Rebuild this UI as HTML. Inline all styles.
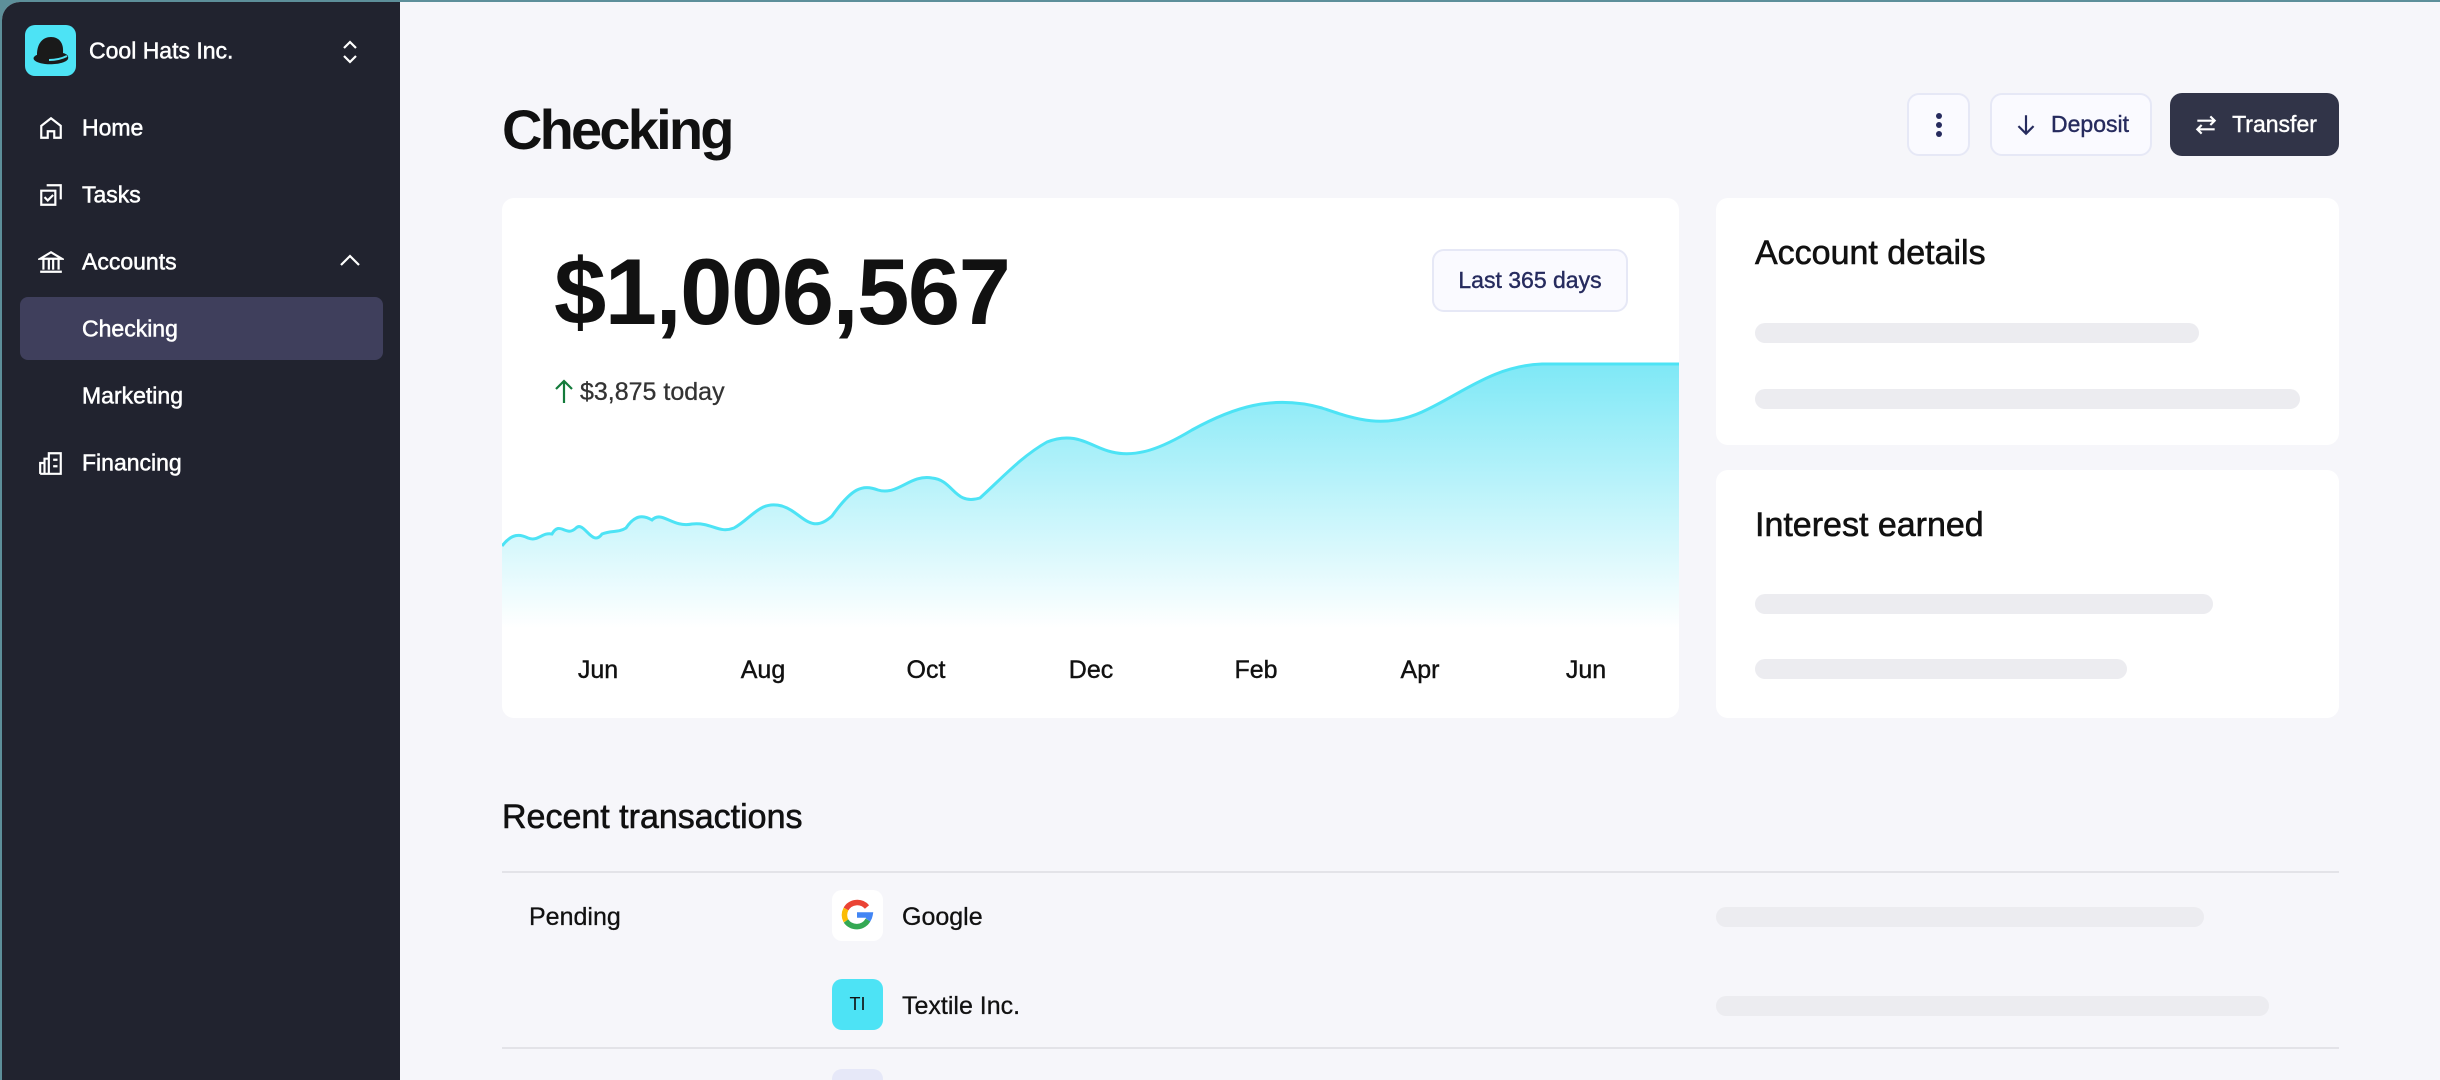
<!DOCTYPE html>
<html><head><meta charset="utf-8"><style>
*{box-sizing:border-box;margin:0;padding:0}
body{width:2440px;height:1080px;overflow:hidden;background:#5d8f9a;font-family:"Liberation Sans",sans-serif}
.frame{position:absolute;left:2px;top:2px;width:2438px;height:1078px;background:#f6f6fa;border-radius:18px 0 0 0;overflow:hidden}
.side{position:absolute;left:0;top:0;width:398px;height:1078px;background:#21232f;color:#fff}
.abs{position:absolute}
.med{-webkit-text-stroke:0.6px currentColor}
.nav{position:absolute;left:80px;font-size:23px;color:#fff;transform:translateY(-50%);-webkit-text-stroke:0.5px #fff}
.ico{position:absolute;left:36px;transform:translateY(-50%)}
.card{position:absolute;background:#fff;border-radius:12px}
.sk{position:absolute;height:20px;border-radius:10px;background:#ececf0}
.btn{position:absolute;border:2px solid #e6e8f6;background:#fafaff;border-radius:12px;color:#262b5e;font-size:23px;display:flex;align-items:center;justify-content:center;-webkit-text-stroke:0.4px #262b5e}
.m{position:absolute;font-size:25px;color:#111;transform:translateX(-50%);-webkit-text-stroke:0.4px #111}
</style></head><body><div class="frame">
<div class="side">
 <div class="abs" style="left:23px;top:23px;width:51px;height:51px;background:#4de3f5;border-radius:10px">
  <svg width="51" height="51" viewBox="0 0 51 51"><path d="M12 30 C12 18 18 12 26 12 C34 12 39 18 38 28 C42 29 44 31 43 34 C41 38 30 40 20 39 C12 38 7 35 9 32 C10 31 11 30 12 30Z" fill="#1a1a1a"/><path d="M24 35 C31 35 38 33 42 31" stroke="#4de3f5" stroke-width="2" fill="none"/></svg>
 </div>
 <div class="nav" style="left:87px;top:49px;font-size:23px">Cool Hats Inc.</div>
 <svg class="abs" style="left:338px;top:37px" width="20" height="26" viewBox="0 0 20 26"><path d="M4 9l6-6 6 6M4 17l6 6 6-6" stroke="#fff" stroke-width="2.2" fill="none"/></svg>
 <svg class="ico" style="top:126px" width="26" height="26" viewBox="0 0 24 24" fill="none" stroke="#fff" stroke-width="2"><path d="M3 10l9-7 9 7v11h-6v-6h-6v6H3z"/></svg>
 <div class="nav" style="top:126px">Home</div>
 <svg class="ico" style="top:193px" width="26" height="26" viewBox="0 0 24 24" fill="none" stroke="#fff" stroke-width="2"><path d="M8 3h13v13M3 8h13v13H3z"/><path d="M6 14l3 3 5-5"/></svg>
 <div class="nav" style="top:193px">Tasks</div>
 <svg class="ico" style="top:260px" width="26" height="26" viewBox="0 0 24 24" fill="none" stroke="#fff" stroke-width="2"><path d="M2 9l10-6 10 6zM5 10v9M10 10v9M14 10v9M19 10v9M2 21h20"/></svg>
 <div class="nav" style="top:260px">Accounts</div>
 <svg class="abs" style="left:336px;top:250px" width="24" height="16" viewBox="0 0 24 16"><path d="M3 13l9-9 9 9" stroke="#fff" stroke-width="2.2" fill="none"/></svg>
 <div class="abs" style="left:18px;top:295px;width:363px;height:63px;background:#3f3f5c;border-radius:8px"></div>
 <div class="nav" style="top:327px">Checking</div>
 <div class="nav" style="top:394px">Marketing</div>
 <svg class="ico" style="top:461px" width="26" height="26" viewBox="0 0 24 24" fill="none" stroke="#fff" stroke-width="2"><path d="M2 22V12h4v10M6 22V8h4v14M10 22V3h11v19zM14 9h4M14 15h4M2 22h20"/></svg>
 <div class="nav" style="top:461px">Financing</div>
</div>

<div class="abs" style="left:500px;top:95px;font-size:56px;color:#111;letter-spacing:-2.8px;font-weight:bold">Checking</div>
<div class="btn" style="left:1905px;top:91px;width:63px;height:63px"><svg width="8" height="26" viewBox="0 0 8 26"><circle cx="4" cy="4" r="3" fill="#262b5e"/><circle cx="4" cy="13" r="3" fill="#262b5e"/><circle cx="4" cy="22" r="3" fill="#262b5e"/></svg></div>
<div class="btn" style="left:1988px;top:91px;width:162px;height:63px"><svg width="26" height="26" viewBox="0 0 24 24" style="margin-right:12px"><path d="M12 3v17M5 13l7 7 7-7" stroke="#262b5e" stroke-width="2" fill="none"/></svg>Deposit</div>
<div class="abs" style="left:2168px;top:91px;width:169px;height:63px;background:#313448;border-radius:12px;color:#fff;font-size:23px;display:flex;align-items:center;justify-content:center;-webkit-text-stroke:0.4px #fff"><svg width="28" height="26" viewBox="0 0 24 24" style="margin-right:12px"><path d="M4 8h16M16 4l4 4-4 4M20 16H4M8 12l-4 4 4 4" stroke="#fff" stroke-width="2" fill="none"/></svg>Transfer</div>

<div class="card" style="left:500px;top:196px;width:1177px;height:520px;overflow:hidden">
 <svg class="abs" style="left:0;top:0" width="1177" height="520">
  <defs><linearGradient id="g" gradientUnits="userSpaceOnUse" x1="0" y1="165" x2="0" y2="430"><stop offset="0" stop-color="#7ee8f6"/><stop offset="1" stop-color="#ffffff"/></linearGradient></defs>
  <path d="M0 348 C10 335 18 336 26 340 C36 344 40 334 50 336 C58 322 64 340 74 330 C82 322 90 350 100 336 C110 332 116 335 124 330 C132 318 140 316 150 322 C160 312 170 330 190 326 C210 324 216 336 232 330 C250 320 258 302 280 308 C300 314 308 338 330 318 C350 290 360 286 376 292 C396 298 408 276 430 280 C452 282 452 308 478 300 C500 280 520 258 545 244 C575 232 590 250 610 254 C635 260 660 250 690 232 C730 210 770 196 820 210 C850 220 880 232 920 214 C960 196 990 168 1040 166 L1177 166 L1177 430 L0 430Z" fill="url(#g)"/>
  <path d="M0 348 C10 335 18 336 26 340 C36 344 40 334 50 336 C58 322 64 340 74 330 C82 322 90 350 100 336 C110 332 116 335 124 330 C132 318 140 316 150 322 C160 312 170 330 190 326 C210 324 216 336 232 330 C250 320 258 302 280 308 C300 314 308 338 330 318 C350 290 360 286 376 292 C396 298 408 276 430 280 C452 282 452 308 478 300 C500 280 520 258 545 244 C575 232 590 250 610 254 C635 260 660 250 690 232 C730 210 770 196 820 210 C850 220 880 232 920 214 C960 196 990 168 1040 166 L1177 166" fill="none" stroke="#4de3f5" stroke-width="3"/>
 </svg>
 <div class="abs" style="left:52px;top:40px;font-size:94px;color:#111;letter-spacing:-1.5px;font-weight:bold">$1,006,567</div>
 <div class="btn" style="left:930px;top:51px;width:196px;height:63px">Last 365 days</div>
 <svg class="abs" style="left:52px;top:180px" width="20" height="26" viewBox="0 0 20 26"><path d="M10 25V3M2 11l8-8 8 8" stroke="#137a3a" stroke-width="2.2" fill="none"/></svg>
 <div class="abs" style="left:78px;top:180px;font-size:25px;color:#333;-webkit-text-stroke:0.3px #333">$3,875 today</div>
 <div class="m" style="left:96px;top:458px">Jun</div>
 <div class="m" style="left:261px;top:458px">Aug</div>
 <div class="m" style="left:424px;top:458px">Oct</div>
 <div class="m" style="left:589px;top:458px">Dec</div>
 <div class="m" style="left:754px;top:458px">Feb</div>
 <div class="m" style="left:918px;top:458px">Apr</div>
 <div class="m" style="left:1084px;top:458px">Jun</div>
</div>

<div class="card" style="left:1714px;top:196px;width:623px;height:247px">
 <div class="abs med" style="left:39px;top:36px;font-size:34px;color:#111">Account details</div>
 <div class="sk" style="left:39px;top:125px;width:444px"></div>
 <div class="sk" style="left:39px;top:191px;width:545px"></div>
</div>
<div class="card" style="left:1714px;top:468px;width:623px;height:248px">
 <div class="abs med" style="left:39px;top:36px;font-size:34px;color:#111">Interest earned</div>
 <div class="sk" style="left:39px;top:124px;width:458px"></div>
 <div class="sk" style="left:39px;top:189px;width:372px"></div>
</div>

<div class="abs med" style="left:500px;top:796px;font-size:34px;color:#111">Recent transactions</div>
<div class="abs" style="left:500px;top:869px;width:1837px;height:2px;background:#e3e3e8"></div>
<div class="abs" style="left:527px;top:901px;font-size:25px;color:#111;-webkit-text-stroke:0.3px #111">Pending</div>
<div class="abs" style="left:830px;top:888px;width:51px;height:51px;background:#fff;border-radius:10px">
 <svg width="51" height="51" viewBox="0 0 51 51"><g fill="none" stroke-width="5.5"><path d="M35 17 A13 13 0 0 0 14 19" stroke="#ea4335"/><path d="M14 19 A13 13 0 0 0 14 31" stroke="#fbbc05"/><path d="M14 31 A13 13 0 0 0 36 30" stroke="#34a853"/><path d="M36 30 A13 13 0 0 0 38 25 H25" stroke="#4285f4"/></g></svg>
</div>
<div class="abs" style="left:900px;top:901px;font-size:25px;color:#111;-webkit-text-stroke:0.3px #111">Google</div>
<div class="sk" style="left:1714px;top:905px;width:488px"></div>
<div class="abs" style="left:830px;top:977px;width:51px;height:51px;background:#4de3f5;border-radius:10px;font-size:18px;color:#111;display:flex;align-items:center;justify-content:center">TI</div>
<div class="abs" style="left:900px;top:990px;font-size:25px;color:#111;-webkit-text-stroke:0.3px #111">Textile Inc.</div>
<div class="sk" style="left:1714px;top:994px;width:553px"></div>
<div class="abs" style="left:500px;top:1045px;width:1837px;height:2px;background:#e3e3e8"></div>
<div class="abs" style="left:830px;top:1067px;width:51px;height:51px;background:#e6e8f8;border-radius:10px"></div>
</div></body></html>
